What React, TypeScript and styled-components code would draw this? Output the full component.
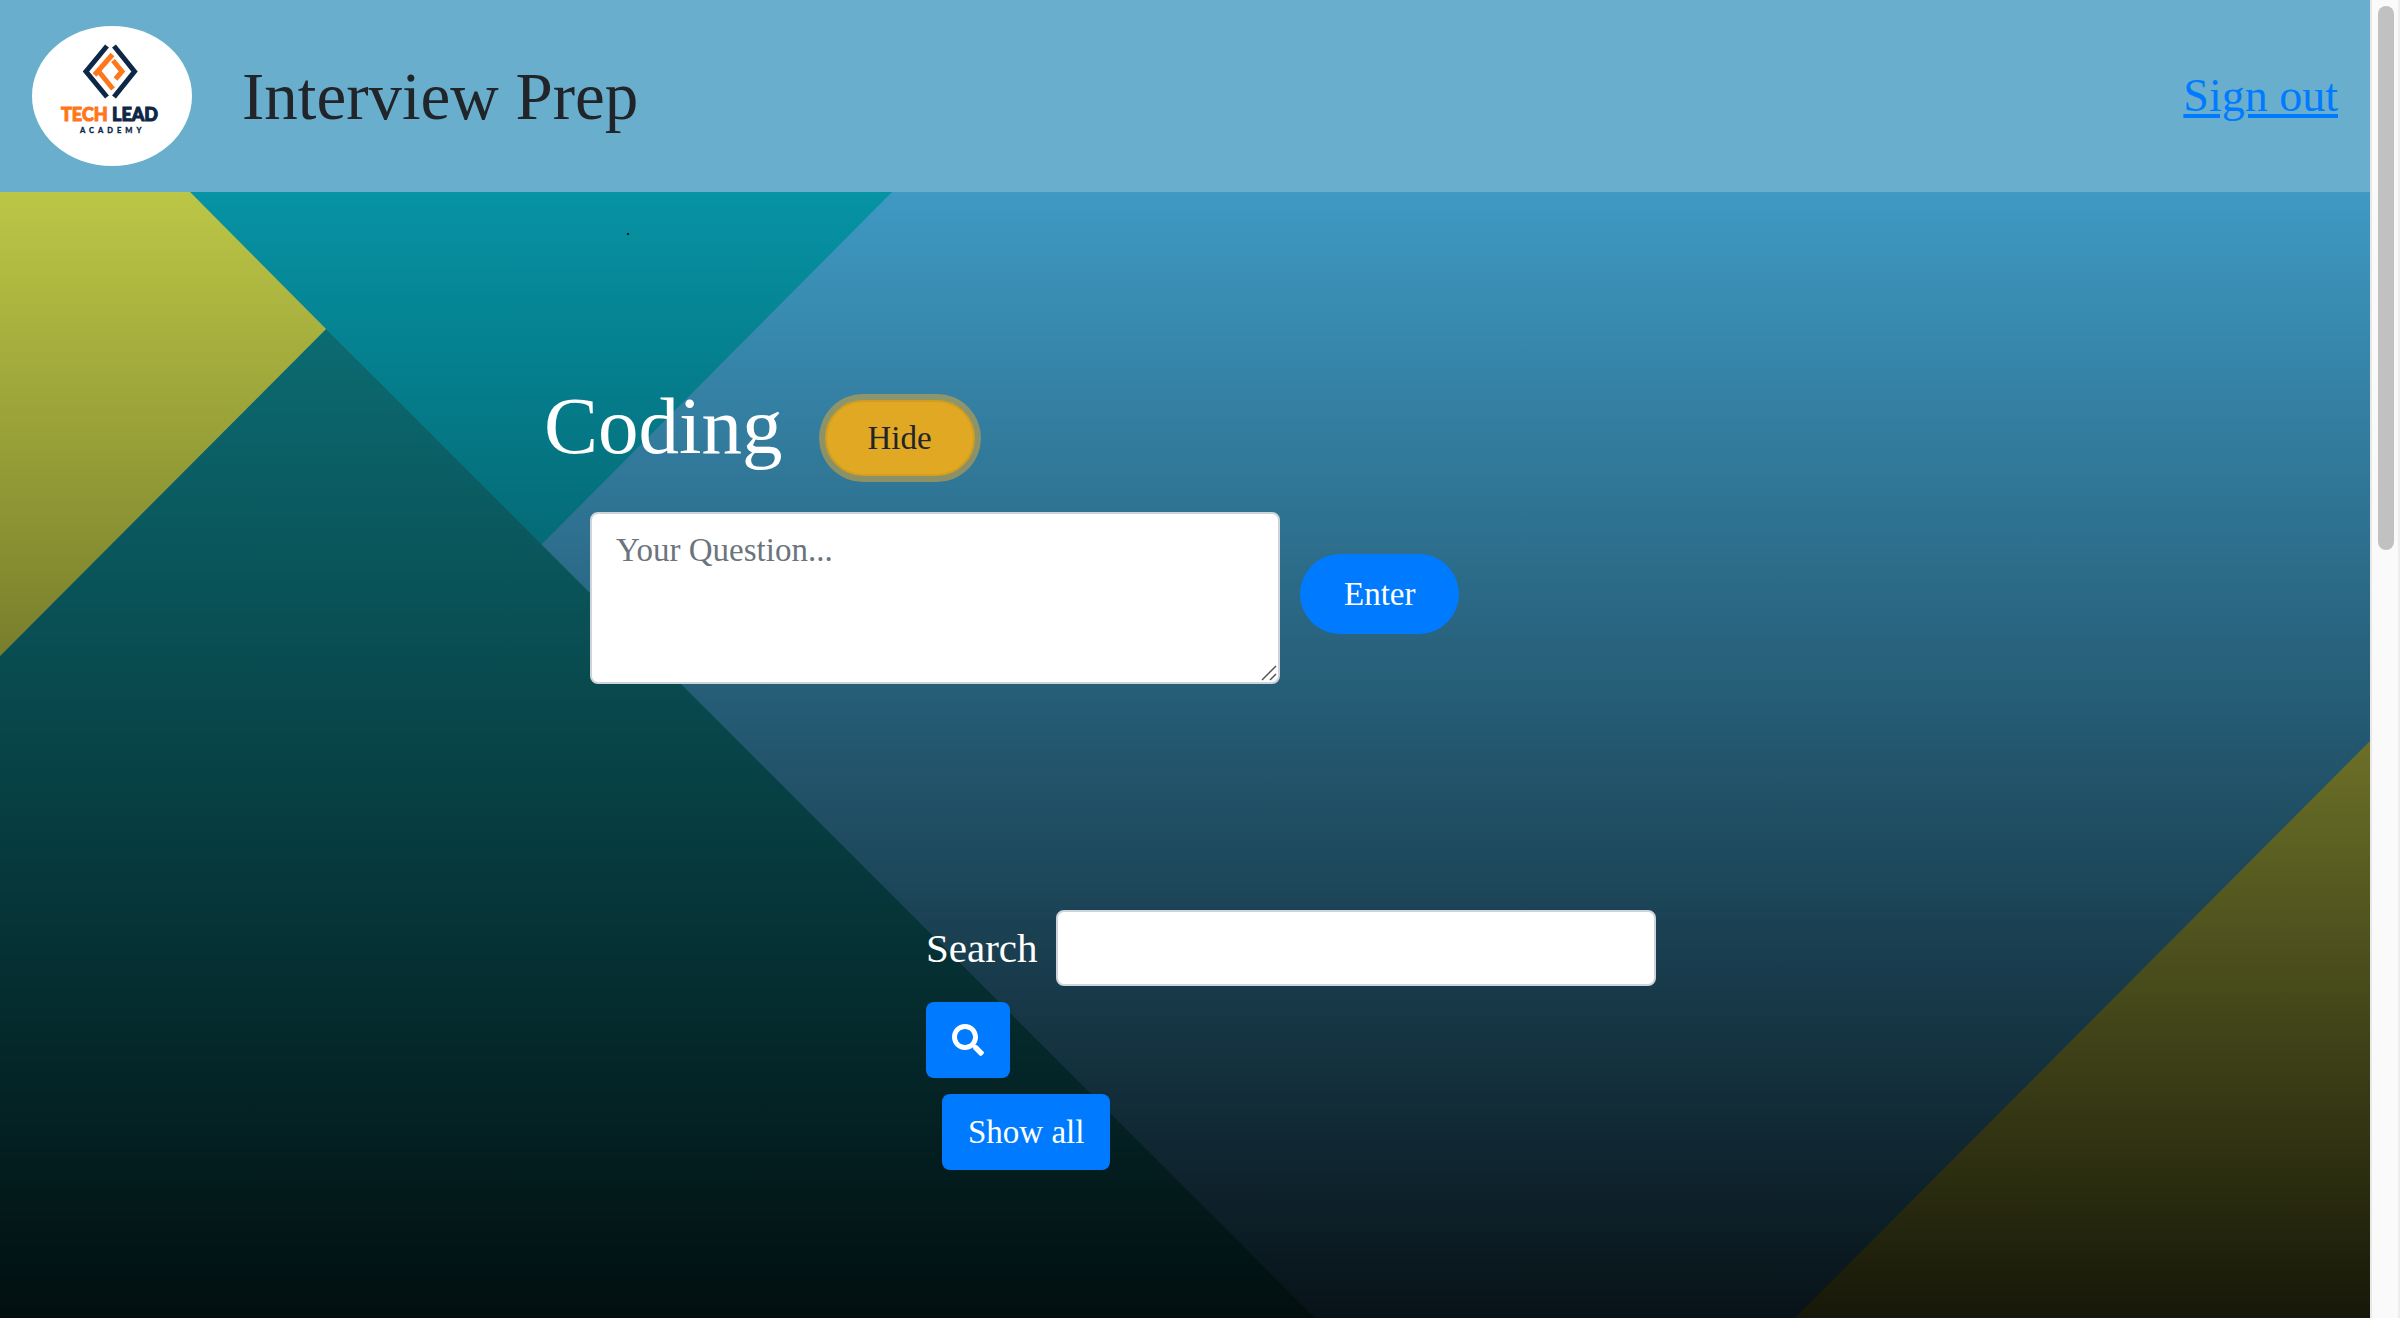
import React from "react";
import styled, { createGlobalStyle, css } from "styled-components";
import { FaSearch } from "react-icons/fa";

const GlobalStyle = createGlobalStyle`
  *, *::before, *::after { box-sizing: border-box; }
  body {
    margin: 0;
    background: #000;
    color: #212529;
    font-family: "Baskerville", "Liberation Serif", "Times New Roman", serif;
    font-size: 33px;
    line-height: 48px;
  }
`;

const Shell = styled.div`
  display: grid;
  grid-template-columns: minmax(0, 1fr) 30px;
  height: 100vh;
  overflow: hidden;
`;

const Page = styled.div`
  display: flex;
  flex-direction: column;
  min-height: 0;
`;

const Header = styled.header`
  display: flex;
  align-items: center;
  gap: 50px;
  padding: 26px 32px;
  background: #69afcd;
`;

const Logo = styled.svg`
  display: block;
  width: 160px;
  height: 140px;
  flex: none;
`;

const Brand = styled.h1`
  margin: 0;
  font-size: 67px;
  font-weight: 400;
  line-height: 80px;
`;

const SignOut = styled.a`
  margin-left: auto;
  color: #007bff;
  font-size: 46px;
  line-height: 56px;
  text-decoration: underline;
  text-decoration-thickness: 4px;
  text-underline-offset: 3px;
`;

const Stage = styled.main`
  position: relative;
  isolation: isolate;
  flex: 1;
  padding: 22px 32px;
  color: #fff;
`;

const Backdrop = styled.svg`
  position: absolute;
  inset: 0;
  z-index: -1;
  width: 100%;
  height: 100%;
`;

const Content = styled.div`
  max-width: 1290px;
  margin: 0 auto;
`;

const Marker = styled.p`
  margin: 0 0 130px;
  padding-left: 86px;
  color: #000;
  font-size: 16px;
  line-height: 32px;
`;

const TitleRow = styled.div`
  display: flex;
  align-items: center;
  gap: 42px;
  padding-left: 4px;
`;

const Title = styled.h2`
  margin: 0;
  font-size: 81px;
  font-weight: 400;
  line-height: 96px;
`;

const fieldStyle = css`
  border: 2px solid #ced4da;
  border-radius: 8px;
  background: #fff;
  color: #495057;
  font: inherit;
`;

const Button = styled.button<{ $pill?: boolean }>`
  display: inline-flex;
  align-items: center;
  justify-content: center;
  min-height: ${(p) => (p.$pill ? 80 : 76)}px;
  padding: 0 ${(p) => (p.$pill ? 44 : 26)}px;
  border: 0;
  border-radius: ${(p) => (p.$pill ? 40 : 8)}px;
  background: #007bff;
  color: #fff;
  font: inherit;
  cursor: pointer;
`;

const HideButton = styled(Button)`
  min-height: 76px;
  margin-top: 24px;
  padding: 0 41px;
  border: 2px solid #d39e20;
  background: #e0a823;
  color: #212529;
  box-shadow: 0 0 0 6px rgba(230, 170, 52, 0.5);
`;

const QuestionForm = styled.form`
  display: flex;
  align-items: center;
  gap: 20px;
  margin-top: 28px;
  padding-left: 50px;
`;

const QuestionField = styled.div`
  position: relative;
  margin-top: 8px;
`;

const QuestionBox = styled.textarea`
  ${fieldStyle}
  display: block;
  width: 690px;
  height: 172px;
  padding: 12px 24px;
  resize: both;

  &::placeholder {
    color: #6c757d;
    opacity: 1;
  }

  &::-webkit-resizer {
    display: none;
  }
`;

const ResizeGrip = styled.svg`
  position: absolute;
  right: 3px;
  bottom: 3px;
  width: 16px;
  height: 16px;
  pointer-events: none;
`;

const SearchForm = styled.form`
  display: flex;
  flex-direction: column;
  align-items: flex-start;
  gap: 16px;
  width: 730px;
  margin: 226px 174px 0 auto;
`;

const SearchField = styled.div`
  display: flex;
  align-items: center;
  justify-content: space-between;
  width: 100%;
`;

const SearchLabel = styled.label`
  font-size: 41px;
  line-height: 48px;
`;

const SearchInput = styled.input`
  ${fieldStyle}
  width: 600px;
  height: 76px;
  padding: 12px 24px;
`;

const ShowAllRow = styled.div`
  display: flex;
  padding-left: 16px;
`;

const ScrollTrack = styled.div`
  padding: 6px 4px 6px 6px;
  border-left: 2px solid #e8e8e8;
  border-right: 2px solid #ededed;
  background: #fafafa;
`;

const ScrollThumb = styled.div`
  width: 16px;
  height: 544px;
  border-radius: 8px;
  background: #c1c1c1;
`;

const AcademyLogo = () => (
  <Logo viewBox="0 0 160 140" role="img" aria-label="Tech Lead Academy">
    <ellipse cx="80" cy="70" rx="80" ry="70" fill="#fff" />
    <g fill="none" strokeWidth="5">
      <path d="M75 20 L54 45.500 L75 71" stroke="#0f2747" />
      <path d="M82 20 L102.500 45.500 L82 71" stroke="#0f2747" />
      <path d="M80.500 28.500 L62.500 49" stroke="#ff761d" />
      <path d="M66 44.500 L81 63" stroke="#ff761d" />
      <path d="M81 34.500 L90 45.500 L83.500 53" stroke="#ff761d" />
    </g>
    <g fontFamily="Lato, sans-serif" fontWeight="900">
      <text x="29" y="95" fontSize="18" fill="#ff761d" stroke="#ff761d" strokeWidth="1">TECH</text>
      <text x="80" y="95" fontSize="18" fill="#0f2747" stroke="#0f2747" strokeWidth="1">LEAD</text>
      <text x="48" y="107" fontSize="7.500" letterSpacing="4" fill="#0f2747" stroke="#0f2747" strokeWidth=".3">ACADEMY</text>
    </g>
  </Logo>
);

const FacetedBackdrop = () => (
  <Backdrop viewBox="0 0 2370 1126" preserveAspectRatio="none" aria-hidden="true">
    <defs>
      <linearGradient id="shade" x1="0" y1="0" x2="0" y2="1">
        <stop offset="0" stopColor="#000" stopOpacity="0" />
        <stop offset="1" stopColor="#000" stopOpacity="0.880" />
      </linearGradient>
    </defs>
    <rect width="2370" height="1126" fill="#3e99c3" />
    <path d="M190 0 H892 L540 354 L326 137 Z" fill="#0693a4" />
    <path d="M0 464 L326 137 L1315 1126 H0 Z" fill="#0d787f" />
    <path d="M0 0 H190 L326 137 L0 464 Z" fill="#bcc645" />
    <path d="M2370 549 V1126 H1795 Z" fill="#bcc445" />
    <rect width="2370" height="1126" fill="url(#shade)" />
  </Backdrop>
);

export default function App() {
  return (
    <>
      <GlobalStyle />
      <Shell>
        <Page>
          <Header>
            <AcademyLogo />
            <Brand>Interview Prep</Brand>
            <SignOut href="#sign-out">Sign out</SignOut>
          </Header>
          <Stage>
            <FacetedBackdrop />
            <Content>
              <Marker>.</Marker>
              <TitleRow>
                <Title>Coding</Title>
                <HideButton type="button" $pill>Hide</HideButton>
              </TitleRow>
              <QuestionForm onSubmit={(e) => e.preventDefault()}>
                <QuestionField>
                  <QuestionBox aria-label="Your question" placeholder="Your Question..." />
                  <ResizeGrip viewBox="0 0 16 16" aria-hidden="true">
                    <path d="M1 15 L15 1 M9 15 L15 9" stroke="#555" strokeWidth="1.5" />
                  </ResizeGrip>
                </QuestionField>
                <Button type="submit" $pill>Enter</Button>
              </QuestionForm>
              <SearchForm onSubmit={(e) => e.preventDefault()}>
                <SearchField>
                  <SearchLabel htmlFor="search">Search</SearchLabel>
                  <SearchInput id="search" type="text" />
                </SearchField>
                <Button type="submit" aria-label="Search">
                  <FaSearch size={32} aria-hidden="true" />
                </Button>
                <ShowAllRow>
                  <Button type="button">Show all</Button>
                </ShowAllRow>
              </SearchForm>
            </Content>
          </Stage>
        </Page>
        <ScrollTrack aria-hidden="true">
          <ScrollThumb />
        </ScrollTrack>
      </Shell>
    </>
  );
}
